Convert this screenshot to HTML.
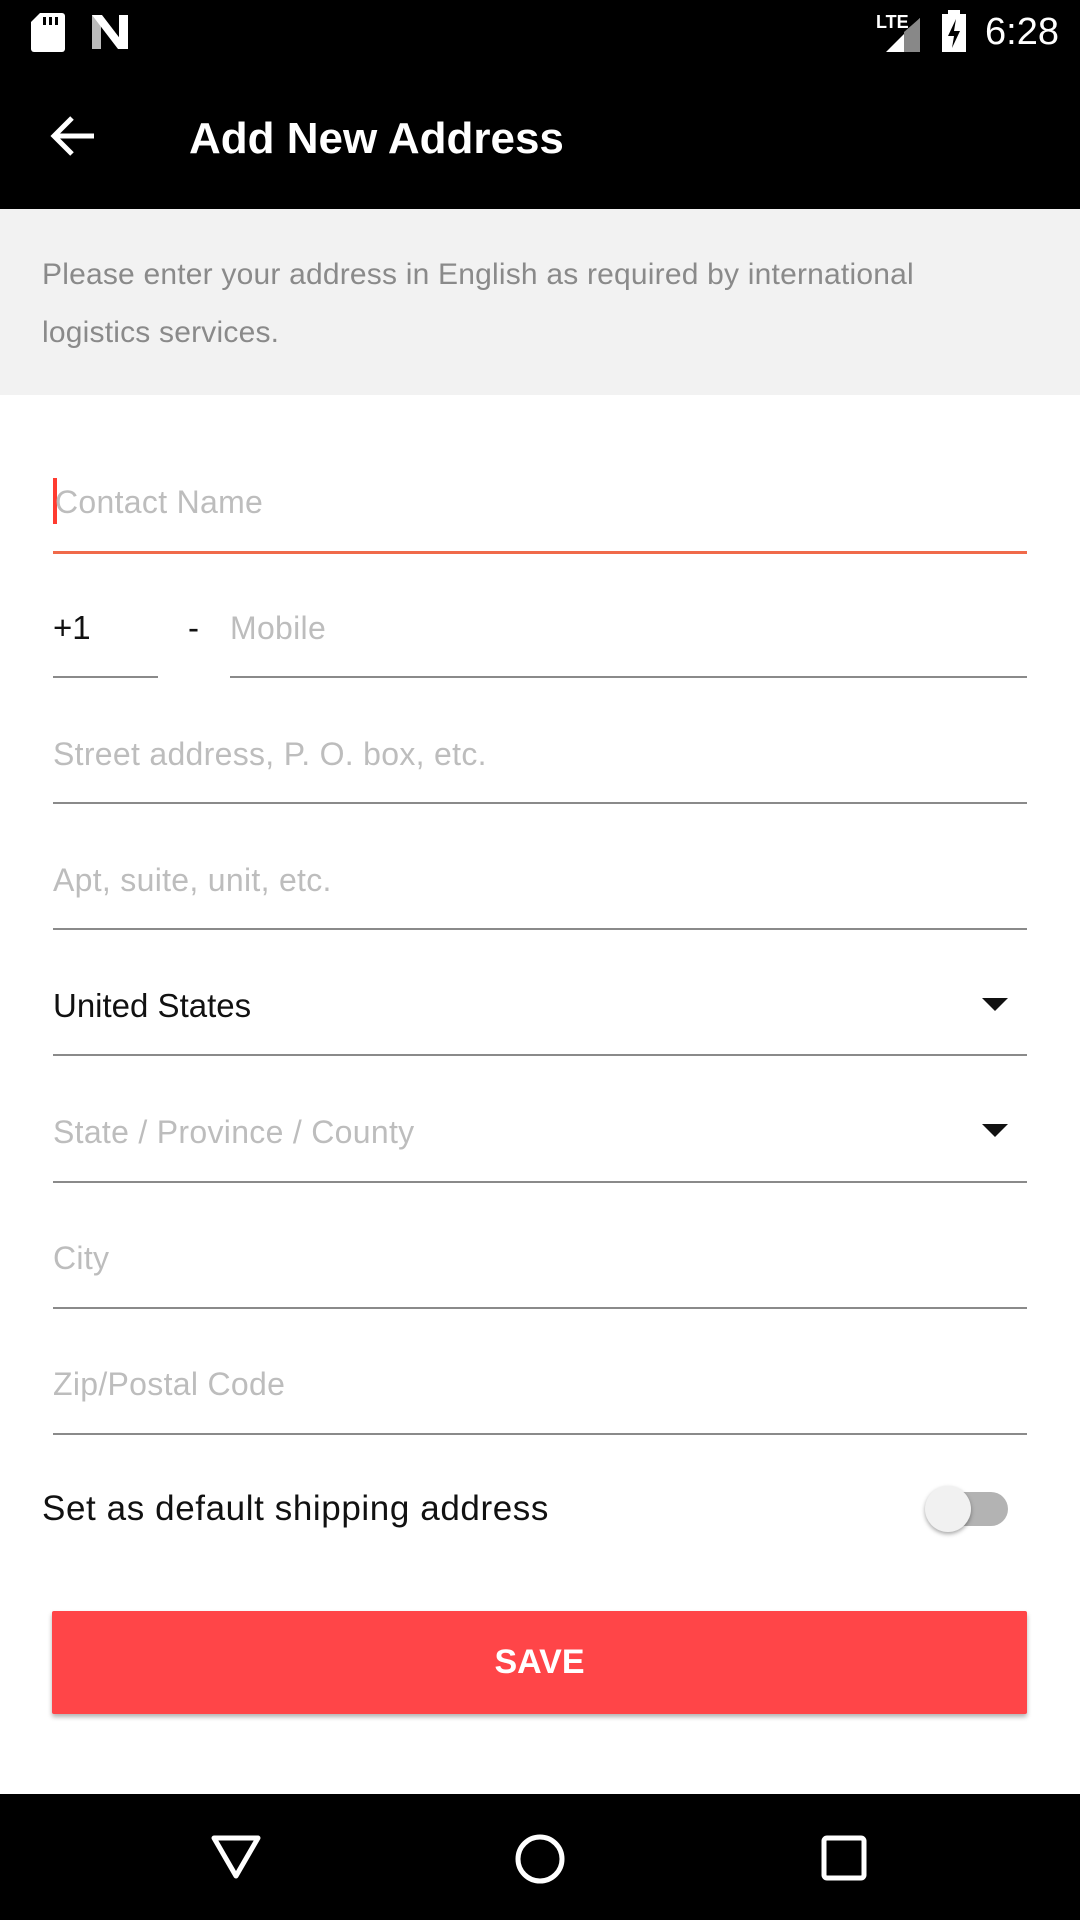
<!DOCTYPE html>
<html><head><meta charset="utf-8"><style>
*{margin:0;padding:0;box-sizing:border-box}
body{width:1080px;height:1920px;background:#fff;font-family:"Liberation Sans",Roboto,sans-serif;position:relative;overflow:hidden}
.abs{position:absolute}
.sb{left:0;top:0;width:1080px;height:76px;background:#000}
.tb{left:0;top:76px;width:1080px;height:133px;background:#000;box-shadow:0 3px 6px rgba(0,0,0,.3)}
.title{left:189px;top:112px;color:#fff;font-size:44px;font-weight:bold;line-height:54px}
.info{left:0;top:209px;width:1080px;height:186px;background:#f2f2f2;color:#8a8a8a;font-size:30px;line-height:58px;padding:37px 100px 0 42px;letter-spacing:0.2px}
.ph{color:#bdbdbd;font-size:32px;line-height:36px;letter-spacing:0.3px}
.line{height:2px;background:#8a8a8a}
.tx{color:#111;font-size:33px;line-height:36px}
.arrow{width:0;height:0;border-left:13px solid transparent;border-right:13px solid transparent;border-top:13px solid #111}
.save{left:52px;top:1611px;width:975px;height:103px;background:#ff4548;color:#fff;font-size:34px;font-weight:bold;text-align:center;line-height:103px;border-radius:2px;box-shadow:0 3px 5px rgba(0,0,0,.3)}
.nav{left:0;top:1794px;width:1080px;height:126px;background:#000}
</style></head><body>
<div class="abs sb"></div>
<svg class="abs" style="left:30px;top:12px" width="36" height="40" viewBox="0 0 36 40"><path d="M10 1h22a3 3 0 0 1 3 3v33a3 3 0 0 1-3 3H4a3 3 0 0 1-3-3V10z" fill="#fff"/><rect x="13" y="5" width="3" height="8" fill="#000"/><rect x="19" y="5" width="3" height="8" fill="#000"/><rect x="25" y="5" width="3" height="8" fill="#000"/></svg>
<svg class="abs" style="left:90px;top:15px" width="40" height="34" viewBox="0 0 40 34"><path d="M2 0h9v34H2z" fill="#bbb"/><path d="M29 0h9v34h-9z" fill="#fff"/><path d="M2 0h10l26 34H28z" fill="#fff"/></svg>
<div class="abs" style="left:876px;top:12px;color:#fff;font-size:18px;font-weight:bold">LTE</div>
<svg class="abs" style="left:880px;top:18px" width="42" height="34"><path d="M40 0v34H6z" fill="#fff"/><path d="M40 0v34H24V14z" fill="#888"/></svg>
<svg class="abs" style="left:940px;top:10px" width="28" height="42"><rect x="8" y="0" width="12" height="5" fill="#fff"/><rect x="2" y="4" width="24" height="38" fill="#fff"/><path d="M16 9l-8 17h6l-2 12 8-17h-6z" fill="#000"/></svg>
<div class="abs" style="left:985px;top:10px;color:#fff;font-size:38px;line-height:44px">6:28</div>
<div class="abs tb"></div>
<svg class="abs" style="left:50px;top:115px" width="46" height="42" viewBox="0 0 46 42"><path d="M44 21H5M22 3L4 21l18 18" stroke="#fff" stroke-width="5" fill="none"/></svg>
<div class="abs title">Add New Address</div>
<div class="abs info">Please enter your address in English as required by international logistics services.</div>

<div class="abs" style="left:53px;top:478px;width:4px;height:46px;background:#ff3b30"></div>
<div class="abs ph" style="left:55px;top:484px">Contact Name</div>
<div class="abs" style="left:53px;top:551px;width:974px;height:3px;background:#f06a4a"></div>

<div class="abs tx" style="left:53px;top:610px">+1</div>
<div class="abs line" style="left:53px;top:676px;width:105px"></div>
<div class="abs tx" style="left:188px;top:610px">-</div>
<div class="abs ph" style="left:230px;top:610px">Mobile</div>
<div class="abs line" style="left:230px;top:676px;width:797px"></div>

<div class="abs ph" style="left:53px;top:736px">Street address, P. O. box, etc.</div>
<div class="abs line" style="left:53px;top:802px;width:974px"></div>
<div class="abs ph" style="left:53px;top:862px">Apt, suite, unit, etc.</div>
<div class="abs line" style="left:53px;top:928px;width:974px"></div>
<div class="abs tx" style="left:53px;top:988px">United States</div>
<div class="abs arrow" style="left:982px;top:998px"></div>
<div class="abs line" style="left:53px;top:1054px;width:974px"></div>
<div class="abs ph" style="left:53px;top:1114px">State / Province / County</div>
<div class="abs arrow" style="left:982px;top:1124px"></div>
<div class="abs line" style="left:53px;top:1181px;width:974px"></div>
<div class="abs ph" style="left:53px;top:1240px">City</div>
<div class="abs line" style="left:53px;top:1307px;width:974px"></div>
<div class="abs ph" style="left:53px;top:1366px">Zip/Postal Code</div>
<div class="abs line" style="left:53px;top:1433px;width:974px"></div>

<div class="abs tx" style="left:42px;top:1491px;font-size:35px;letter-spacing:0.6px">Set as default shipping address</div>
<div class="abs" style="left:944px;top:1492px;width:64px;height:34px;border-radius:17px;background:#b3b3b3"></div>
<div class="abs" style="left:925px;top:1486px;width:46px;height:46px;border-radius:50%;background:#f1f1f1;box-shadow:0 2px 4px rgba(0,0,0,.35)"></div>

<div class="abs save">SAVE</div>

<div class="abs nav"></div>
<svg class="abs" style="left:210px;top:1834px" width="52" height="46"><path d="M4 4h44L26 42z" stroke="#fff" stroke-width="5" fill="none" stroke-linejoin="round"/></svg>
<svg class="abs" style="left:514px;top:1833px" width="52" height="52"><circle cx="26" cy="26" r="22" stroke="#fff" stroke-width="5" fill="none"/></svg>
<svg class="abs" style="left:821px;top:1835px" width="46" height="46"><rect x="3" y="3" width="40" height="40" rx="3" stroke="#fff" stroke-width="5" fill="none"/></svg>
</body></html>
